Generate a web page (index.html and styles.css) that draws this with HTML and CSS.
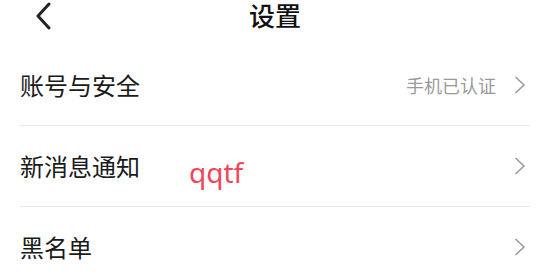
FILE: index.html
```html
<!DOCTYPE html>
<html lang="zh-CN">
<head>
<meta charset="utf-8">
<link rel="stylesheet" href="styles.css">
</head>
<body>
<div class="page">
  <header class="header">
    <svg class="back" width="16" height="28" viewBox="0 0 16 28"><path d="M13 2 L2 14 L13 26" fill="none" stroke="#222" stroke-width="3" stroke-linecap="round" stroke-linejoin="round"/></svg>
    <h1 class="title">设置</h1>
  </header>
  <ul class="list">
    <li class="row">
      <span class="label">账号与安全</span>
      <span class="extra">手机已认证</span>
      <svg class="chev" width="12" height="18" viewBox="0 0 12 18"><path d="M1.5 1 L10 9 L1.5 17" fill="none" stroke="#999" stroke-width="1.5"/></svg>
    </li>
    <li class="row">
      <span class="label">新消息通知</span>
      <span class="mark">qqtf</span>
      <svg class="chev" width="12" height="18" viewBox="0 0 12 18"><path d="M1.5 1 L10 9 L1.5 17" fill="none" stroke="#999" stroke-width="1.5"/></svg>
    </li>
    <li class="row">
      <span class="label">黑名单</span>
      <svg class="chev" width="12" height="18" viewBox="0 0 12 18"><path d="M1.5 1 L10 9 L1.5 17" fill="none" stroke="#999" stroke-width="1.5"/></svg>
    </li>
  </ul>
</div>
</body>
</html>
```

FILE: styles.css
```css
* { box-sizing: border-box; }
html, body {
  margin: 0;
  padding: 0;
  background: #fff;
}
body {
  font-family: "Noto Sans CJK SC", "Noto Sans", sans-serif;
  color: #1a1a1a;
}
.page {
  width: 550px;
  height: 275px;
  overflow: hidden;
}
.header {
  position: relative;
  height: 45px;
  padding-top: 2px;
  display: flex;
  justify-content: center;
}
.back {
  position: absolute;
  left: 36px;
  top: 2px;
}
.title {
  margin: 0;
  font-family: "Liberation Sans", "Noto Sans CJK SC", sans-serif;
  font-size: 26px;
  font-weight: 500;
  line-height: 30px;
  color: #111;
}
.list {
  list-style: none;
  margin: 0;
  padding: 0 20px;
}
.row {
  position: relative;
  display: flex;
  align-items: center;
  height: 81px;
  border-bottom: 1px solid #e8e8e8;
}
.label {
  flex: 1;
  font-size: 24px;
  line-height: 30px;
}
.extra {
  font-size: 18px;
  color: #9a9a9a;
  margin-right: 18px;
}
.chev {
  margin-right: 4px;
}
.mark {
  position: absolute;
  left: 169px;
  top: 32px;
  font-family: "Noto Sans", sans-serif;
  font-size: 28px;
  line-height: 1;
  color: #f04656;
}
```
